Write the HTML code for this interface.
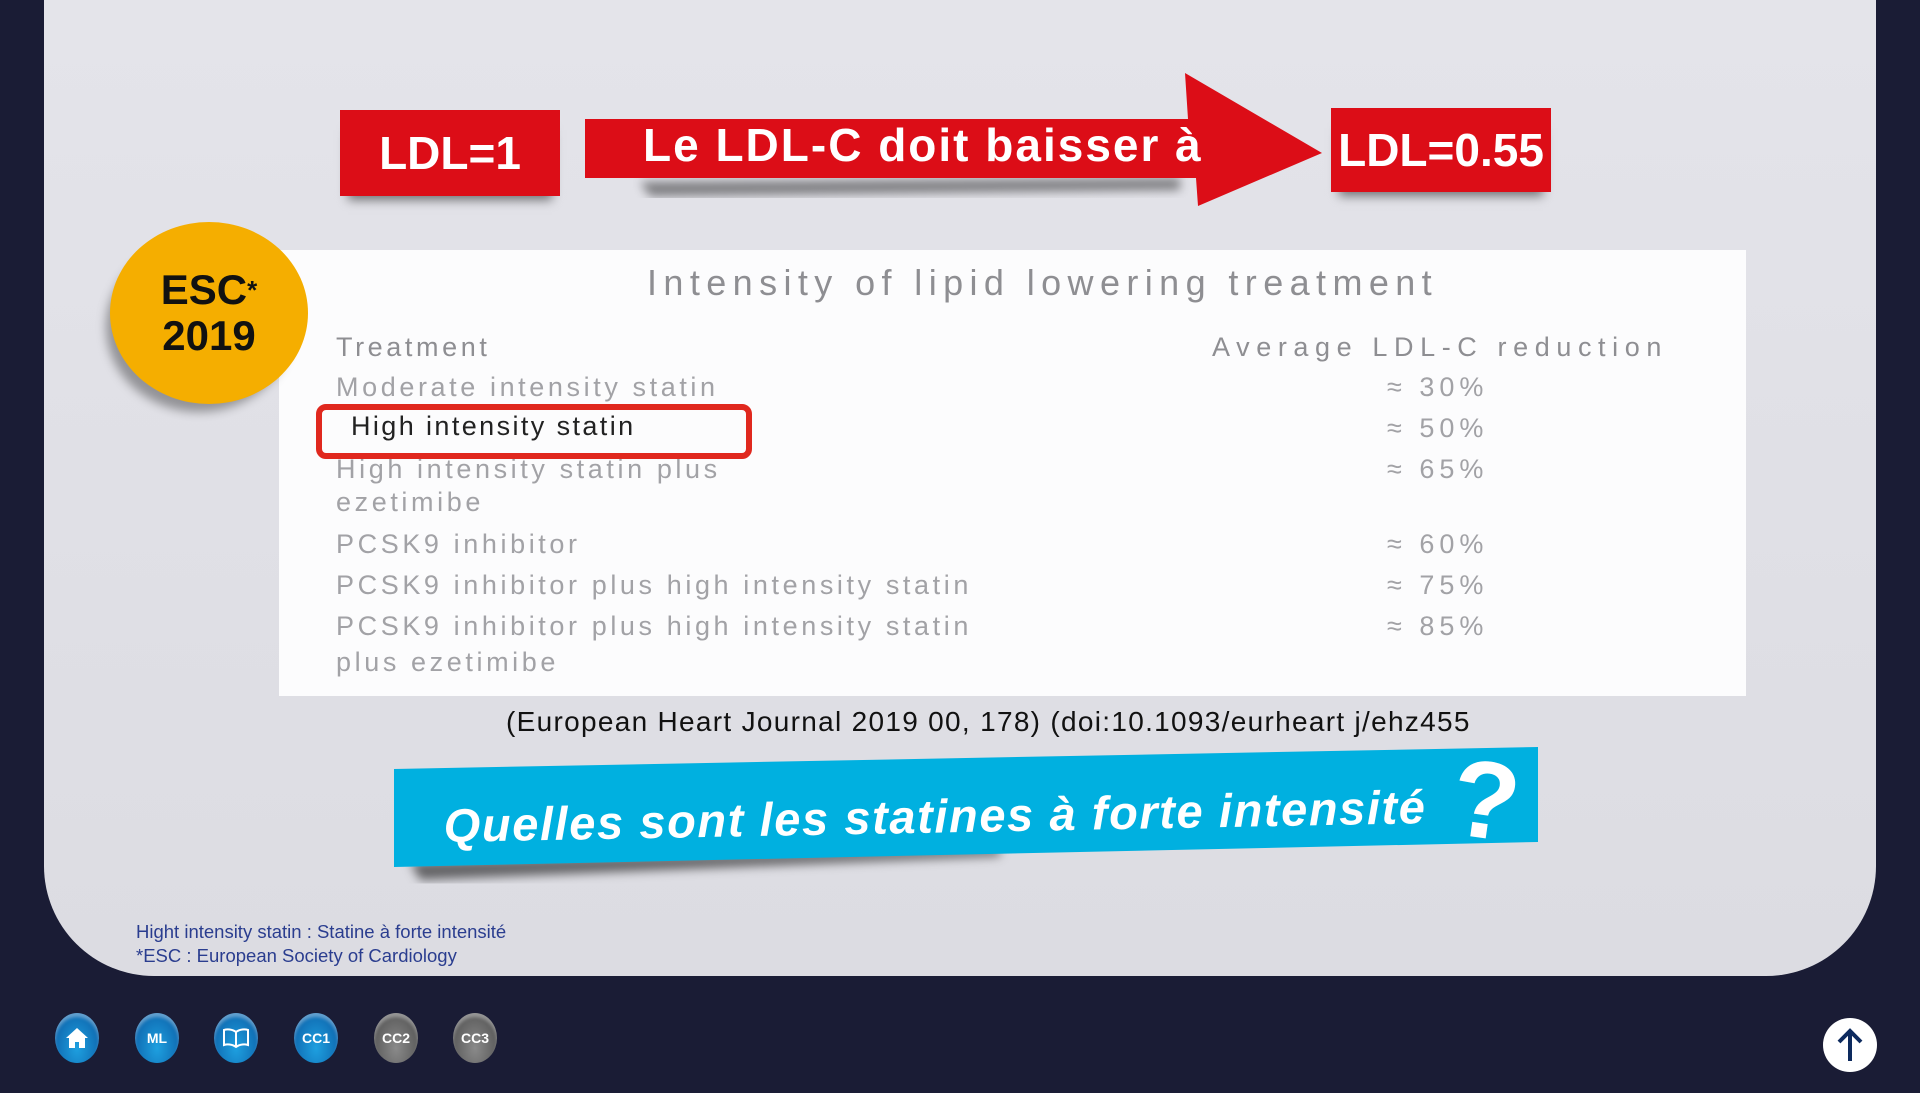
<!DOCTYPE html>
<html><head><meta charset="utf-8"><style>
*{margin:0;padding:0;box-sizing:border-box}
body{width:1920px;height:1093px;background:#1a1c35;position:relative;overflow:hidden;font-family:"Liberation Sans",sans-serif}
.slide{position:absolute;left:44px;top:0;width:1832px;height:976px;background:linear-gradient(#e4e4ea,#dcdce2);border-radius:0 0 110px 110px}
.abs{position:absolute}
.red{background:#dc0d17;color:#fff;font-size:46px;display:flex;align-items:center;justify-content:center;box-shadow:0 12px 10px -8px rgba(0,0,0,.5);font-family:"Liberation Sans",sans-serif;font-weight:bold}
.tbl{left:279px;top:250px;width:1467px;height:446px;background:#fcfcfd}
.t{position:absolute;color:#a2a2a6;font-size:27px;letter-spacing:3.6px;white-space:nowrap}
.btn{position:absolute;top:1013px;width:44px;height:50px;border-radius:50%;background:radial-gradient(ellipse at 50% 70%,#1ea0e0,#0a57a0);color:#fff;font-weight:bold;font-size:14px;display:flex;align-items:center;justify-content:center;box-shadow:inset 0 4px 3px rgba(255,255,255,.35)}
.g{background:radial-gradient(ellipse at 50% 70%,#8a8a8a,#4a4a4a)}
</style></head><body>
<div class="slide"></div>
<div class="abs red" style="left:340px;top:110px;width:220px;height:86px">LDL=1</div>
<svg class="abs" style="left:0;top:0" width="1920" height="300">
<defs><filter id="b"><feGaussianBlur stdDeviation="5"/></filter></defs>
<polygon points="640,182 1180,178 1180,190 650,196" fill="rgba(0,0,0,.45)" filter="url(#b)"/>
<polygon points="585,119 1188,119 1185,73 1322,153 1198,206 1196,178 585,178" fill="#dc0d17"/>
<text x="643" y="161" fill="#fff" font-size="46" font-weight="bold" letter-spacing="2" font-family="Liberation Sans, sans-serif">Le LDL-C doit baisser à</text>
</svg>
<div class="abs red" style="left:1331px;top:108px;width:220px;height:84px">LDL=0.55</div>
<div class="abs tbl">
<div class="t" style="left:368px;top:12px;font-size:36px;color:#8e8e92;letter-spacing:6.4px">Intensity of lipid lowering treatment</div>
<div class="t" style="left:57px;top:82px;color:#8e8e92">Treatment</div>
<div class="t" style="left:933px;top:82px;color:#8e8e92;letter-spacing:6.6px">Average LDL-C reduction</div>
<div class="t" style="left:57px;top:122px">Moderate intensity statin</div>
<div class="t" style="left:72px;top:161px;color:#222;letter-spacing:2.4px">High intensity statin</div>
<div class="t" style="left:57px;top:204px">High intensity statin plus</div>
<div class="t" style="left:57px;top:237px">ezetimibe</div>
<div class="t" style="left:57px;top:279px">PCSK9 inhibitor</div>
<div class="t" style="left:57px;top:320px">PCSK9 inhibitor plus high intensity statin</div>
<div class="t" style="left:57px;top:361px">PCSK9 inhibitor plus high intensity statin</div>
<div class="t" style="left:57px;top:397px">plus ezetimibe</div>
<div class="t" style="left:1108px;top:122px;letter-spacing:5px">≈ 30%</div>
<div class="t" style="left:1108px;top:163px;letter-spacing:5px">≈ 50%</div>
<div class="t" style="left:1108px;top:204px;letter-spacing:5px">≈ 65%</div>
<div class="t" style="left:1108px;top:279px;letter-spacing:5px">≈ 60%</div>
<div class="t" style="left:1108px;top:320px;letter-spacing:5px">≈ 75%</div>
<div class="t" style="left:1108px;top:361px;letter-spacing:5px">≈ 85%</div>
</div>
<div class="abs" style="left:316px;top:404px;width:436px;height:55px;border:6px solid #e0281e;border-radius:10px"></div>
<div class="abs" style="left:110px;top:222px;width:198px;height:182px;border-radius:50%;background:#f5ae00;box-shadow:-10px 14px 10px -6px rgba(0,0,0,.35);display:flex;flex-direction:column;align-items:center;justify-content:center;font-size:42px;color:#111;line-height:46px;font-family:'Liberation Sans',sans-serif;font-weight:bold">
<div>ESC<span style="font-size:26px;vertical-align:top">*</span></div><div>2019</div></div>
<div class="abs" style="left:506px;top:706px;font-size:28px;color:#111;letter-spacing:1.3px;font-family:'Liberation Sans',sans-serif">(European Heart Journal 2019 00, 178) (doi:10.1093/eurheart j/ehz455</div>
<svg class="abs" style="left:0;top:0" width="1920" height="1093">
<defs><filter id="b2"><feGaussianBlur stdDeviation="5"/></filter></defs>
<polygon points="410,862 1000,848 1000,856 420,880" fill="rgba(0,0,0,.55)" filter="url(#b2)"/>
<polygon points="394,769 1538,747 1538,842 394,867" fill="#00b0e0"/>
<text x="444" y="842" fill="#fff" font-size="47" font-weight="bold" font-style="italic" letter-spacing="1.6" transform="rotate(-1.1 444 842)" font-family="Liberation Sans, sans-serif">Quelles sont les statines à forte intensité</text>
<text x="1452" y="838" fill="#fff" font-size="110" font-weight="bold" transform="rotate(8 1485 800)" font-family="Liberation Sans, sans-serif">?</text>
</svg>
<div class="abs" style="left:136px;top:920px;font-size:18.5px;color:#2a3d8f;line-height:24px">Hight intensity statin : Statine à forte intensité<br>*ESC : European Society of Cardiology</div>
<div class="btn" style="left:55px"><svg width="24" height="22" viewBox="0 0 24 22"><path d="M12 1L1 11h3v10h6v-6h4v6h6V11h3z" fill="#fff"/></svg></div>
<div class="btn" style="left:135px">ML</div>
<div class="btn" style="left:214px"><svg width="28" height="20" viewBox="0 0 28 20"><path d="M14 4C10 1 5 1 2 2v15c3-1 8-1 12 2 4-3 9-3 12-2V2c-3-1-8-1-12 2zM14 4v15" fill="none" stroke="#fff" stroke-width="2"/></svg></div>
<div class="btn" style="left:294px">CC1</div>
<div class="btn g" style="left:374px">CC2</div>
<div class="btn g" style="left:453px">CC3</div>
<div class="abs" style="left:1823px;top:1018px;width:54px;height:54px;border-radius:50%;background:#fff"><svg width="54" height="54" viewBox="0 0 54 54"><path d="M27 43V12M16 24L27 13 38 24" fill="none" stroke="#0d2a5e" stroke-width="4"/></svg></div>
</body></html>
